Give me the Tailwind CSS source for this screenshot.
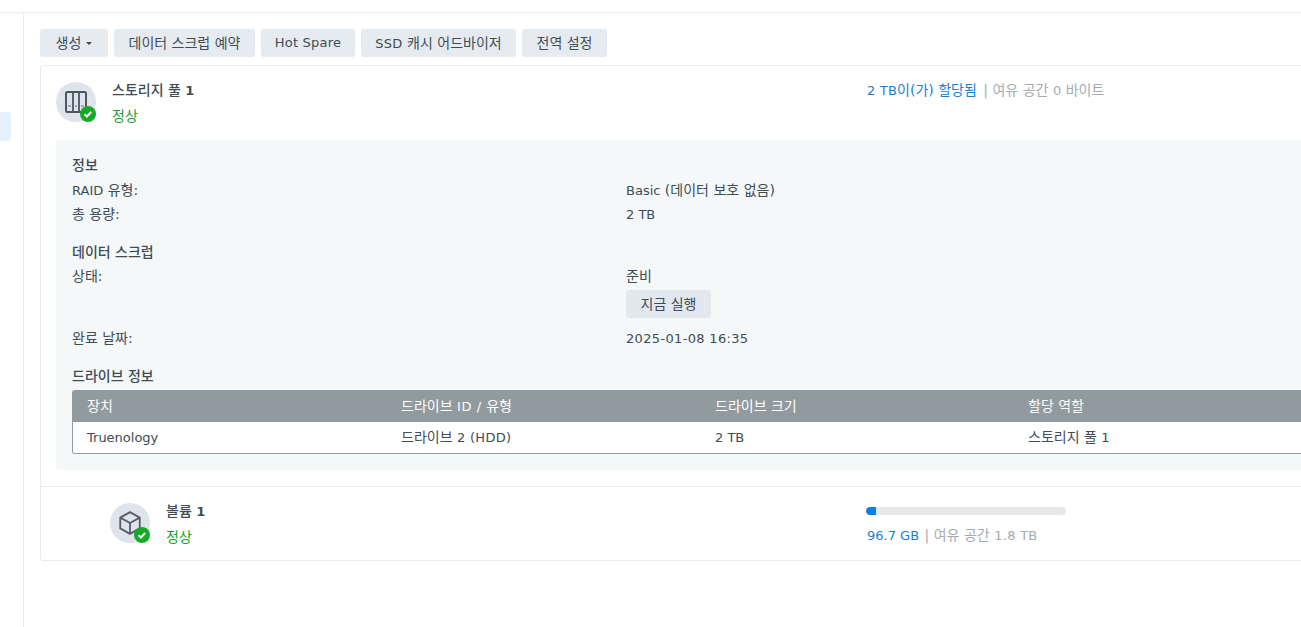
<!DOCTYPE html>
<html lang="ko">
<head>
    <meta charset="UTF-8">
    <title>스토리지 풀</title>
    <script src="https://cdn.jsdelivr.net/npm/@tailwindcss/browser@4"></script>
</head>
<body class="h-[627px] w-[1301px] overflow-hidden bg-white text-[14px] leading-[20px] text-[#414b55] font-['DejaVu_Sans','Noto_Sans_CJK_KR',sans-serif]">
    <div class="mt-[12px] flex h-[615px] border-t border-[#e8eaec]">
        <!-- sidebar -->
        <div class="w-[24px] shrink-0 border-r border-[#e8eaec] pt-[99px]">
            <div class="h-[29px] w-[11px] rounded-r-[3px] bg-[#e6f0fd]"></div>
        </div>

        <div class="w-[1320px] shrink-0 pl-[16px] pt-[16px]">
            <!-- toolbar -->
            <div class="flex gap-[6px]">
                <button class="flex h-[28px] w-[68px] items-center justify-center gap-[5px] rounded-[3px] bg-[#e6ebf0]">생성<span class="mt-[1px] border-x-[3px] border-t-[3px] border-x-transparent border-t-[#414b55]"></span></button>
                <button class="h-[28px] w-[141px] rounded-[3px] bg-[#e6ebf0]">데이터 스크럽 예약</button>
                <button class="h-[28px] w-[94px] rounded-[3px] bg-[#e6ebf0] text-[13px] tracking-[0.2px]">Hot Spare</button>
                <button class="h-[28px] w-[155px] rounded-[3px] bg-[#e6ebf0]"><span class="text-[13px] tracking-[0.3px]">SSD</span> 캐시 어드바이저</button>
                <button class="h-[28px] w-[85px] rounded-[3px] bg-[#e6ebf0]">전역 설정</button>
            </div>

            <!-- pool card -->
            <div class="mt-[8px] h-[496px] rounded-[3px] border border-[#e8eaec]">
                <div class="flex h-[74px] pl-[15px] pt-[16px]">
                    <div class="relative h-[40px] w-[40px] rounded-full bg-[#dfe4ec]">
                        <svg class="absolute left-[9px] top-[9px]" width="22" height="22" viewBox="0 0 22 22" fill="none">
                            <rect x="1" y="1" width="20" height="20" rx="1.5" stroke="#4b5663" stroke-width="2"/>
                            <path d="M8 2v18M14 2v18" stroke="#4b5663" stroke-width="1.8"/>
                            <path d="M3 15h3M10 15h2M16 15h3" stroke="#8a94a0" stroke-width="1.5"/>
                        </svg>
                        <svg class="absolute left-[24px] top-[24px]" width="16" height="16" viewBox="0 0 16 16">
                            <circle cx="8" cy="8" r="8" fill="#14aa28"/>
                            <path d="M4.5 8.2l2.4 2.3 4.4-4.6" fill="none" stroke="#fff" stroke-width="2"/>
                        </svg>
                    </div>
                    <div class="ml-[16px] w-[755px] -mt-[2px]">
                        <div class="font-medium">스토리지 풀 <span class="text-[13px] font-bold">1</span></div>
                        <div class="mt-[5px] text-[#14a02d]">정상</div>
                    </div>
                    <div class="-mt-[2px]"><span class="text-[#1c7ed0]"><span class="text-[13px] tracking-[0.2px]">2 TB</span>이(가) 할당됨</span><span class="ml-[2px] text-[#a4abb2]"> | 여유 공간 <span class="text-[13px]">0</span> 바이트</span></div>
                </div>

                <!-- detail panel -->
                <div class="ml-[15px] h-[330px] rounded-[3px] bg-[#f4f8f9] px-[16px] pt-[15px]">
                    <div class="font-medium">정보</div>
                    <div class="mt-[5px] grid grid-cols-[554px_1fr] gap-y-[3px]">
                        <div><span class="text-[13px]">RAID</span> 유형:</div><div><span class="text-[13px]">Basic</span> (데이터 보호 없음)</div>
                        <div>총 용량:</div><div class="pt-[1px] text-[13px]">2 TB</div>
                    </div>
                    <div class="mt-[17px] font-medium">데이터 스크럽</div>
                    <div class="mt-[4px] grid grid-cols-[554px_1fr]">
                        <div>상태:</div>
                        <div>
                            <div>준비</div>
                            <button class="mt-[4px] h-[28px] w-[85px] rounded-[3px] bg-[#e2e8ee]">지금 실행</button>
                        </div>
                        <div class="mt-[10px]">완료 날짜:</div><div class="mt-[11px] text-[13px] tracking-[0.33px]">2025-01-08 16:35</div>
                    </div>
                    <div class="mt-[17px] font-medium">드라이브 정보</div>
                    <div class="mt-[4px] overflow-hidden rounded-[3px] border-b border-l border-[#92989d]">
                        <div class="-ml-px grid h-[32px] grid-cols-[314px_314px_313px_1fr] items-center bg-[#919a9e] px-[15px] text-white">
                            <div>장치</div><div>드라이브 <span class="text-[13px] tracking-[0.6px]">ID /</span> 유형</div><div>드라이브 크기</div><div>할당 역할</div>
                        </div>
                        <div class="-ml-px grid h-[31px] grid-cols-[314px_314px_313px_1fr] items-center bg-white px-[15px]">
                            <div class="pt-[1px] text-[13px]">Truenology</div><div>드라이브 <span class="text-[13px] tracking-[0.3px]">2 (HDD)</span></div><div class="pt-[1px] text-[13px]">2 TB</div><div>스토리지 풀 <span class="text-[13px]">1</span></div>
                        </div>
                    </div>
                </div>

                <!-- volume row -->
                <div class="mt-[16px] flex border-t border-[#e8eaec] pl-[69px] pt-[16px]">
                    <div class="relative h-[40px] w-[40px] rounded-full bg-[#dfe4ec]">
                        <svg class="absolute left-[7px] top-[7px]" width="26" height="26" viewBox="0 0 24 24" fill="none" stroke="#555f6b" stroke-width="1.7" stroke-linejoin="round">
                            <path d="M12 2l9 5v10l-9 5-9-5V7z"/>
                            <path d="M3 7l9 5 9-5M12 12v10"/>
                        </svg>
                        <svg class="absolute left-[24px] top-[24px]" width="16" height="16" viewBox="0 0 16 16">
                            <circle cx="8" cy="8" r="8" fill="#14aa28"/>
                            <path d="M4.5 8.2l2.4 2.3 4.4-4.6" fill="none" stroke="#fff" stroke-width="2"/>
                        </svg>
                    </div>
                    <div class="ml-[16px] w-[701px] -mt-[2px]">
                        <div class="font-medium">볼륨 <span class="text-[13px] font-bold">1</span></div>
                        <div class="mt-[5px] text-[#14a02d]">정상</div>
                    </div>
                    <div>
                        <div class="-ml-px mt-[4px] h-[8px] w-[200px] overflow-hidden rounded-full bg-[#e8e8e8]">
                            <div class="h-full rounded-l-full bg-[#0a7fea]" style="width: 5%"></div>
                        </div>
                        <div class="mt-[10px]"><span class="text-[13px] text-[#1c7ed0]">96.7 GB</span><span class="ml-[1px] text-[#a4abb2]"> | 여유 공간 <span class="text-[13px] tracking-[0.3px]">1.8 TB</span></span></div>
                    </div>
                </div>
            </div>
        </div>
    </div>
</body>
</html>
